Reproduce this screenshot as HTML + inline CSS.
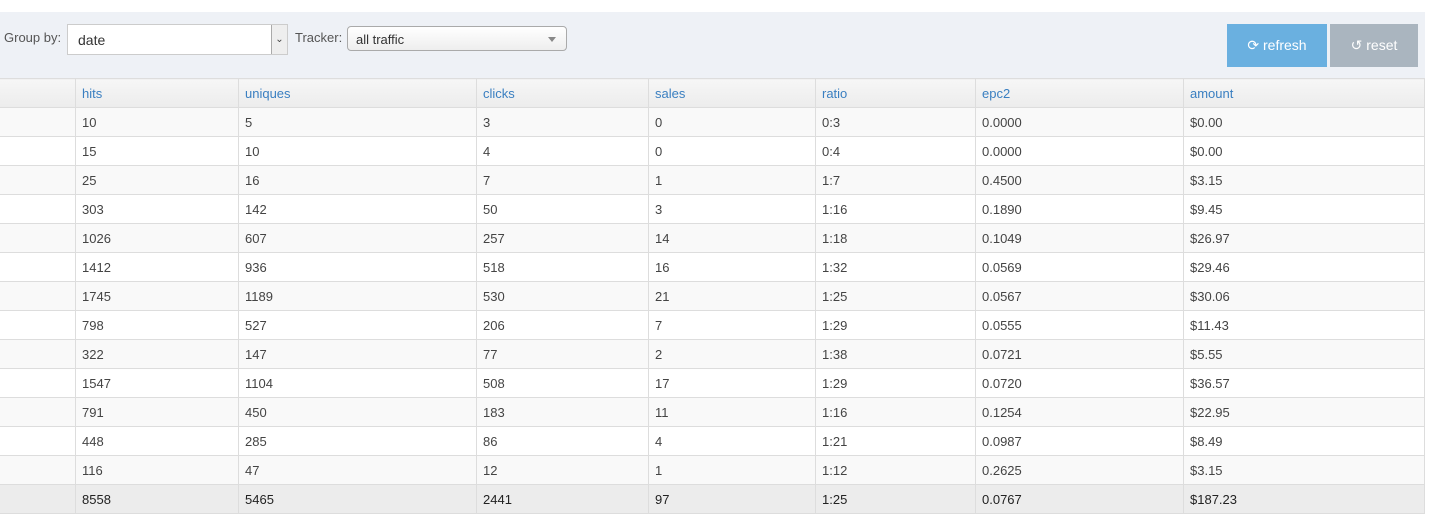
<!DOCTYPE html>
<html><head><style>
body{margin:0;width:1437px;height:528px;background:#fff;font-family:"Liberation Sans",sans-serif;font-size:13px;color:#444;position:relative;overflow:hidden}
.panel{position:absolute;left:0;top:12px;width:1425px;height:66px;background:#eef1f6}
.lbl{position:absolute;font-size:13px;color:#555}
.sel1{position:absolute;left:67px;top:24px;width:219px;height:29px;border:1px solid #ccc;background:#fff}
.sel1 span{position:absolute;left:10px;top:7px;font-size:14px;color:#333}
.sel1 .arr{position:absolute;right:0;top:0;width:15px;height:29px;border-left:1px solid #aaa;background:#eee;font-size:10px;text-align:center;line-height:29px;color:#444}
.sel2{position:absolute;left:347px;top:26px;width:218px;height:23px;border:1px solid #aaa;border-radius:4px;background:linear-gradient(#fff,#eee)}
.sel2 span{position:absolute;left:8px;top:5px;font-size:13px;color:#333}
.sel2 .tri{position:absolute;right:10px;top:10px;border-left:4px solid transparent;border-right:4px solid transparent;border-top:5px solid #888}
.btn{position:absolute;top:24px;height:43px;color:#fff;font-size:14px;line-height:43px;text-align:center}
table{position:absolute;left:-1px;top:78px;border-collapse:collapse;width:1426px}
td,th{border:1px solid #ddd;height:28px;padding:0 0 0 6px;text-align:left;font-weight:normal}
th{color:#3a7fc1;background:linear-gradient(#f6f6f6,#ececec)}
tr:nth-child(even) td{background:#f9f9f9}
tr.tot td{background:#ececec;color:#222}
</style></head><body>
<div class="panel"></div>
<div class="lbl" style="left:4px;top:30px">Group by:</div>
<div class="sel1"><span>date</span><div class="arr">&#8964;</div></div>
<div class="lbl" style="left:295px;top:30px">Tracker:</div>
<div class="sel2"><span>all traffic</span><div class="tri"></div></div>
<div class="btn" style="left:1227px;width:100px;background:#6ab0e0">&#10227; refresh</div>
<div class="btn" style="left:1330px;width:88px;background:#aab5bf">&#8634; reset</div>
<table>
<colgroup><col style="width:76px"><col style="width:163px"><col style="width:238px"><col style="width:172px"><col style="width:167px"><col style="width:160px"><col style="width:208px"><col></colgroup>
<tr><th></th><th>hits</th><th>uniques</th><th>clicks</th><th>sales</th><th>ratio</th><th>epc2</th><th>amount</th></tr>
<tr><td></td><td>10</td><td>5</td><td>3</td><td>0</td><td>0:3</td><td>0.0000</td><td>$0.00</td></tr>
<tr><td></td><td>15</td><td>10</td><td>4</td><td>0</td><td>0:4</td><td>0.0000</td><td>$0.00</td></tr>
<tr><td></td><td>25</td><td>16</td><td>7</td><td>1</td><td>1:7</td><td>0.4500</td><td>$3.15</td></tr>
<tr><td></td><td>303</td><td>142</td><td>50</td><td>3</td><td>1:16</td><td>0.1890</td><td>$9.45</td></tr>
<tr><td></td><td>1026</td><td>607</td><td>257</td><td>14</td><td>1:18</td><td>0.1049</td><td>$26.97</td></tr>
<tr><td></td><td>1412</td><td>936</td><td>518</td><td>16</td><td>1:32</td><td>0.0569</td><td>$29.46</td></tr>
<tr><td></td><td>1745</td><td>1189</td><td>530</td><td>21</td><td>1:25</td><td>0.0567</td><td>$30.06</td></tr>
<tr><td></td><td>798</td><td>527</td><td>206</td><td>7</td><td>1:29</td><td>0.0555</td><td>$11.43</td></tr>
<tr><td></td><td>322</td><td>147</td><td>77</td><td>2</td><td>1:38</td><td>0.0721</td><td>$5.55</td></tr>
<tr><td></td><td>1547</td><td>1104</td><td>508</td><td>17</td><td>1:29</td><td>0.0720</td><td>$36.57</td></tr>
<tr><td></td><td>791</td><td>450</td><td>183</td><td>11</td><td>1:16</td><td>0.1254</td><td>$22.95</td></tr>
<tr><td></td><td>448</td><td>285</td><td>86</td><td>4</td><td>1:21</td><td>0.0987</td><td>$8.49</td></tr>
<tr><td></td><td>116</td><td>47</td><td>12</td><td>1</td><td>1:12</td><td>0.2625</td><td>$3.15</td></tr>
<tr class="tot"><td></td><td>8558</td><td>5465</td><td>2441</td><td>97</td><td>1:25</td><td>0.0767</td><td>$187.23</td></tr>
</table>
</body></html>
